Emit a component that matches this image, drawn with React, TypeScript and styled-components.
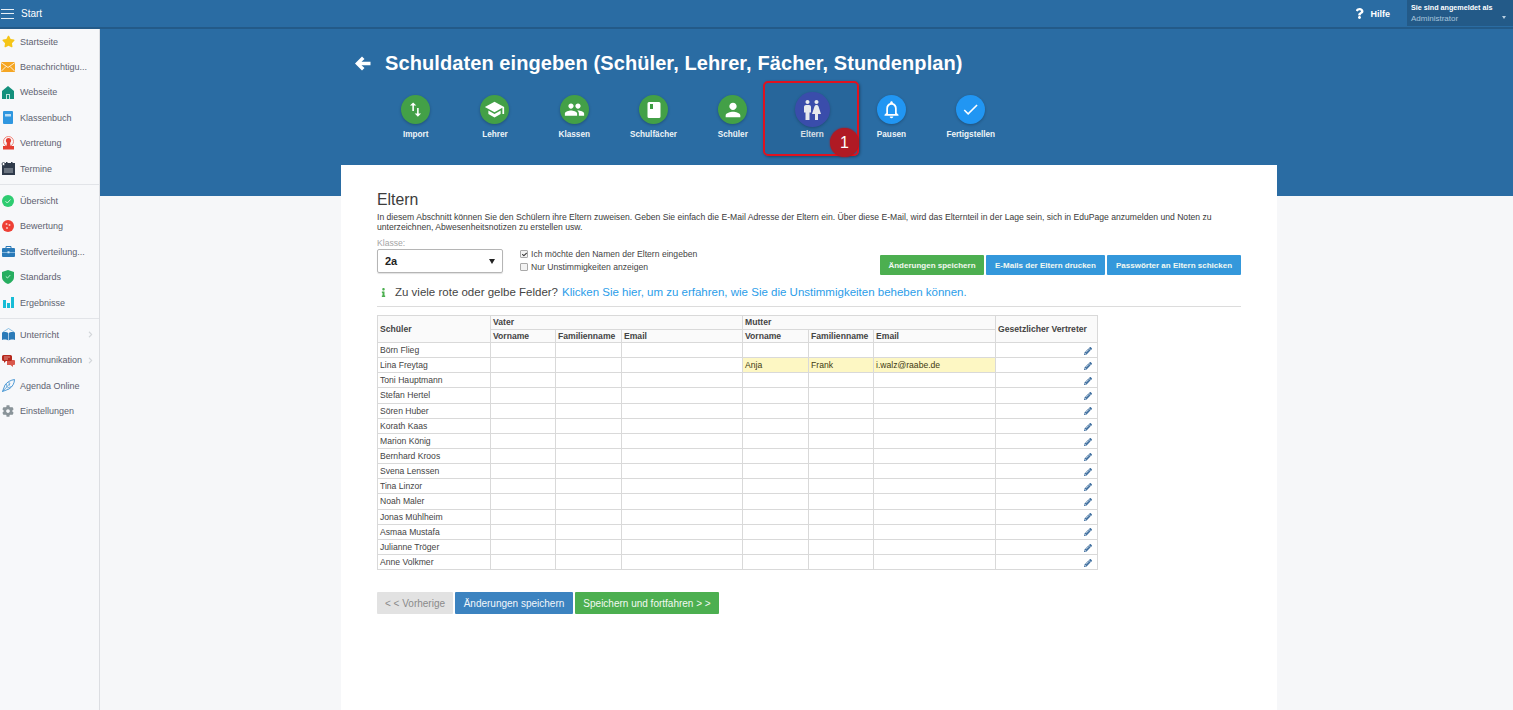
import styled, { createGlobalStyle } from "styled-components";
import {
  MdSwapVert,
  MdSchool,
  MdPeople,
  MdPerson,
  MdWc,
  MdNotificationsNone,
  MdCheck,
} from "react-icons/md";
import {
  FaQuestion,
  FaPencilAlt,
  FaInfo,
  FaStar,
  FaCog,
  FaChevronRight,
  FaCheck,
} from "react-icons/fa";

const GlobalStyle = createGlobalStyle`
  html, body {
    margin: 0;
    padding: 0;
    height: 710px;
    overflow: hidden;
    background: #f6f7f9;
    font-family: "Liberation Sans", Arial, sans-serif;
  }
  * { box-sizing: border-box; }
`;

const Page = styled.div`
  width: 1513px;
  height: 710px;
  display: flex;
  flex-direction: column;
  overflow: hidden;
`;

const TopBar = styled.header`
  flex: none;
  height: 29px;
  background: #2a6ca3;
  border-bottom: 2px solid #235a88;
  display: flex;
  align-items: center;
  color: #fff;
`;

const Burger = styled.div`
  width: 13px;
  height: 10px;
  margin: 0 8px 0 1px;
  border-top: 1px solid #e8f0f6;
  border-bottom: 1px solid #e8f0f6;
  position: relative;
  &::after {
    content: "";
    position: absolute;
    left: 0;
    right: 0;
    top: 3px;
    height: 1px;
    background: #e8f0f6;
  }
`;

const StartLabel = styled.span`
  font-size: 10px;
  margin-left: -1px;
`;

const HelpLink = styled.div`
  margin-left: auto;
  display: flex;
  align-items: center;
  gap: 5px;
  font-size: 9px;
  font-weight: 700;
  margin-right: 17px;
`;

const UserBox = styled.div`
  width: 106px;
  height: 26px;
  margin: 0 0 1px;
  padding: 2px 4px;
  background: #235a88;
  position: relative;
  font-size: 8px;
  line-height: 11px;
  &::after {
    content: "";
    position: absolute;
    right: 7px;
    top: 16px;
    border: 2.5px solid transparent;
    border-top: 3px solid #b9cfe0;
  }
`;

const UserTitle = styled.div`
  font-weight: 700;
  font-size: 7.2px;
  white-space: nowrap;
`;

const UserName = styled.div`
  color: #a9c6dd;
`;

const Body = styled.div`
  flex: 1;
  display: flex;
  min-height: 0;
`;

const Sidebar = styled.nav`
  flex: none;
  width: 100px;
  background: #f7f8fa;
  border-right: 1px solid #dcdee2;
`;

const SideGroup = styled.div<{ $last?: boolean }>`
  padding: 0 0 3px;
  border-bottom: ${(p) => (p.$last ? "none" : "1px solid #e2e4e8")};
  margin-bottom: 3px;
`;

const SideItem = styled.div`
  height: 25.4px;
  display: flex;
  align-items: center;
  position: relative;
  font-size: 9px;
  color: #5e6270;
  white-space: nowrap;
`;

const SideIcon = styled.span`
  width: 20px;
  flex: none;
  display: flex;
  justify-content: center;
  padding-right: 4px;
  svg { display: block; }
`;

const Caret = styled.span`
  position: absolute;
  right: 5px;
  top: 9px;
  color: #d3d6da;
  display: flex;
`;

const Main = styled.main`
  flex: 1;
  min-width: 0;
`;

const Banner = styled.div`
  height: 167px;
  background: #2a6ca3;
  padding: 1px 0 0 241px;
  position: relative;
`;

const HeadColumn = styled.div`
  width: 936px;
  color: #fff;
`;

const TitleRow = styled.div`
  display: flex;
  align-items: center;
  gap: 14px;
  padding: 16px 0 0 14px;
  height: 50px;
`;

const Title = styled.h1`
  margin: 0;
  font-size: 20px;
  font-weight: 700;
  letter-spacing: 0.09px;
  white-space: nowrap;
`;

const Steps = styled.div`
  display: flex;
  padding: 12px 0 0 35px;
`;

const Step = styled.div`
  width: 79.3px;
  height: 50px;
  display: flex;
  flex-direction: column;
  align-items: center;
  font-size: 8.2px;
  font-weight: 700;
  color: #eef4f8;
  white-space: nowrap;
`;

const StepIconSlot = styled.div`
  height: 35px;
  display: flex;
  align-items: center;
  justify-content: center;
  margin-bottom: 3px;
`;

const StepCircle = styled.div<{ $color: string; $big?: boolean }>`
  width: ${(p) => (p.$big ? 35 : 29)}px;
  height: ${(p) => (p.$big ? 35 : 29)}px;
  border-radius: 50%;
  background: ${(p) => p.$color};
  display: flex;
  align-items: center;
  justify-content: center;
  color: #fff;
  box-shadow: 0 1px 3px rgba(0, 0, 0, 0.25);
`;

const Highlight = styled.div`
  position: absolute;
  left: 663px;
  top: 52px;
  width: 96px;
  height: 75px;
  border: 2px solid #e0121f;
  border-radius: 5px;
  background: rgba(20, 50, 90, 0.1);
  box-shadow: 1px 1px 3px rgba(0, 0, 0, 0.35);
`;

const Badge = styled.div`
  position: absolute;
  left: 730px;
  top: 99px;
  width: 29px;
  height: 29px;
  border-radius: 50%;
  background: #b01a24;
  color: #fff;
  font-size: 16px;
  display: flex;
  align-items: center;
  justify-content: center;
  box-shadow: 0 0 2px rgba(200, 0, 0, 0.8);
`;

const Card = styled.section`
  position: relative;
  width: 936px;
  height: 600px;
  margin: -31px 0 0 241px;
  padding: 25px 36px 0;
  background: #fff;
  color: #333;
`;

const SectionTitle = styled.h2`
  margin: 0;
  font-size: 15.8px;
  font-weight: 400;
  line-height: 19px;
  color: #3c3c3c;
`;

const Intro = styled.p`
  margin: 3px 0 0;
  width: 864px;
  font-size: 8.6px;
  line-height: 10px;
  color: #3a3a3a;
`;

const FormRow = styled.div`
  display: flex;
  align-items: flex-start;
  margin-top: 6px;
`;

const FieldLabel = styled.div`
  font-size: 8.6px;
  line-height: 11px;
  color: #a5a5a5;
`;

const SelectBox = styled.div`
  width: 126px;
  height: 24px;
  border: 1px solid #b5b5b5;
  border-radius: 2px;
  box-shadow: 0 1px 1px rgba(0, 0, 0, 0.12);
  padding: 0 7px;
  display: flex;
  align-items: center;
  justify-content: space-between;
  font-size: 11px;
  font-weight: 700;
  color: #222;
`;

const Arrow = styled.span`
  width: 0;
  height: 0;
  border: 3px solid transparent;
  border-top: 5px solid #222;
  margin: 4px 0 0;
`;

const Checks = styled.div`
  margin: 11px 0 0 17px;
  display: flex;
  flex-direction: column;
  gap: 3px;
`;

const CheckLine = styled.label`
  display: flex;
  align-items: center;
  gap: 3px;
  font-size: 8.6px;
  line-height: 10px;
  color: #444;
`;

const CheckSquare = styled.span`
  width: 8px;
  height: 8px;
  border: 1px solid #a9a9a9;
  border-radius: 1px;
  background: #f3f3f3;
  display: flex;
  align-items: center;
  justify-content: center;
  color: #333;
`;

const ActionGroup = styled.div`
  margin: 17px 0 0 auto;
  display: flex;
  gap: 2px;
`;

const SmallButton = styled.div<{ $color: string; $width: number }>`
  width: ${(p) => p.$width}px;
  height: 20px;
  background: ${(p) => p.$color};
  color: #f2f8f2;
  border-radius: 1px;
  font-size: 8px;
  font-weight: 700;
  display: flex;
  align-items: center;
  justify-content: center;
  white-space: nowrap;
`;

const Hint = styled.div`
  display: flex;
  align-items: center;
  margin-top: 10px;
  padding: 0 0 7px 2px;
  border-bottom: 1px solid #dcdcdc;
  font-size: 11.5px;
  line-height: 14px;
  color: #444;
  white-space: nowrap;
`;

const HintIcon = styled.span`
  color: #4caf50;
  width: 16px;
  display: flex;
`;

const HintLink = styled.span`
  color: #2b9de9;
  margin-left: 4px;
`;

const Grid = styled.table`
  margin-top: 8px;
  width: 720px;
  table-layout: fixed;
  border-collapse: collapse;
  font-size: 8.6px;
  color: #444;
`;

const HeadCell = styled.th`
  border: 1px solid #d9d9d9;
  background: #fafafa;
  text-align: left;
  font-weight: 700;
  padding: 0 2px;
  height: 13.5px;
  line-height: 10px;
  white-space: nowrap;
`;

const Cell = styled.td<{ $warn?: boolean }>`
  border: 1px solid #d9d9d9;
  background: ${(p) => (p.$warn ? "#fdf7c3" : "#fff")};
  height: 15.15px;
  padding: 0 2px;
  line-height: 10px;
  white-space: nowrap;
  color: ${(p) => (p.$warn ? "#3d3a12" : "#444")};
`;

const EditCell = styled(Cell)`
  text-align: right;
  padding: 0 5px 0 0;
  color: #3f6f9f;
  svg { display: inline-block; vertical-align: middle; }
`;

const BottomButtons = styled.div`
  display: flex;
  gap: 2px;
  margin-top: 22px;
`;

const BigButton = styled.div<{ $bg: string; $fg: string; $width: number }>`
  width: ${(p) => p.$width}px;
  height: 22px;
  background: ${(p) => p.$bg};
  color: ${(p) => p.$fg};
  border-radius: 1px;
  font-size: 10px;
  display: flex;
  align-items: center;
  justify-content: center;
  white-space: nowrap;
`;

const BackArrow = () => (
  <svg width="16" height="15" viewBox="0 0 16 15" fill="#fff">
    <path d="M0 7.500 7 .5 9.500 3 6.500 5.800H15.500V9.200H6.500L9.500 12 7 14.500Z" />
  </svg>
);

const EnvelopeIcon = () => (
  <svg width="14" height="10" viewBox="0 0 14 10">
    <rect width="14" height="10" fill="#f5a623" />
    <path d="M0 0.5 7 5.5 14 0.5M0 9.5 5 4.5M14 9.5 9 4.5" fill="none" stroke="#fff" strokeWidth="0.8" />
  </svg>
);

const HomeIcon = () => (
  <svg width="12" height="13" viewBox="0 0 12 13">
    <path d="M6 0 12 5V13H0V5Z" fill="#13907c" />
    <rect x="4" y="8" width="4" height="5" fill="#bfe3dc" />
    <rect x="5" y="9" width="2" height="4" fill="#13907c" />
  </svg>
);

const BookIcon = () => (
  <svg width="10" height="13" viewBox="0 0 10 13">
    <rect width="10" height="13" rx="1" fill="#2f97e0" />
    <rect x="2" y="3" width="6" height="2.5" fill="#bcdff6" />
  </svg>
);

const StampIcon = () => (
  <svg width="13" height="14" viewBox="0 0 13 14">
    <circle cx="6.5" cy="5.5" r="5" fill="none" stroke="#ef6a5c" strokeWidth="0.8" />
    <circle cx="6.5" cy="4.5" r="2.6" fill="#e53d30" />
    <path d="M5 6h3l.5 4H12v3.5H1V10h3.500Z" fill="#e53d30" />
  </svg>
);

const CalendarIcon = () => (
  <svg width="14" height="13" viewBox="0 0 14 13">
    <rect x="1" y="1" width="13" height="12" fill="#2f3a4a" />
    <rect x="3" y="6" width="9" height="5" fill="#6b7480" />
    <circle cx="2.500" cy="2" r="1.500" fill="#fff" stroke="#2f3a4a" strokeWidth="0.8" />
    <rect x="5" y="0" width="1.500" height="3" fill="#2f3a4a" />
    <rect x="10" y="0" width="1.500" height="3" fill="#2f3a4a" />
  </svg>
);

const GreenCheckIcon = () => (
  <svg width="12" height="12" viewBox="0 0 12 12">
    <circle cx="6" cy="6" r="6" fill="#2ecc71" />
    <path d="M3.500 6.200 5.300 8 8.500 4.500" fill="none" stroke="#c9f5da" strokeWidth="1" />
  </svg>
);

const GradeIcon = () => (
  <svg width="12" height="12" viewBox="0 0 12 12">
    <circle cx="6" cy="6" r="6" fill="#ee4035" />
    <circle cx="4.500" cy="4" r="1" fill="#fbc4bf" />
    <circle cx="7.500" cy="5" r="1" fill="#fbc4bf" />
    <circle cx="5" cy="8" r="1" fill="#fbc4bf" />
  </svg>
);

const CaseIcon = () => (
  <svg width="13" height="11" viewBox="0 0 13 11">
    <path d="M4 2V.5h5V2" fill="none" stroke="#2a7ab8" />
    <rect y="2" width="13" height="9" rx="1" fill="#2a7ab8" />
    <rect y="6" width="13" height="0.7" fill="#a8d0ec" />
    <rect x="5.500" y="5.300" width="2" height="2" fill="#d7ebf8" />
  </svg>
);

const ShieldIcon = () => (
  <svg width="12" height="14" viewBox="0 0 12 14">
    <path d="M6 0 12 2V7C12 10.500 9 12.800 6 14 3 12.800 0 10.500 0 7V2Z" fill="#27ae60" />
    <path d="M3.800 6.500 5.500 8 8.300 5" fill="none" stroke="#c9f5da" strokeWidth="0.9" />
  </svg>
);

const BarsIcon = () => (
  <svg width="11" height="11" viewBox="0 0 11 11">
    <rect y="3" width="3" height="8" fill="#17bcd6" />
    <rect x="4" y="6" width="3" height="5" fill="#17bcd6" />
    <rect x="8" y="0" width="3" height="11" fill="#17bcd6" />
  </svg>
);

const OpenBookIcon = () => (
  <svg width="13" height="13" viewBox="0 0 13 13">
    <path d="M1 4 6.500.5 12 4" fill="none" stroke="#6fb1de" strokeWidth="0.8" />
    <path d="M0 4.500C2.500 3.800 5 4 6.200 5.200V12.500C5 11.500 2.500 11.200 0 12Z" fill="#2a7ab8" />
    <path d="M13 4.500C10.500 3.800 8 4 6.800 5.200V12.500C8 11.500 10.500 11.200 13 12Z" fill="#2a7ab8" />
  </svg>
);

const BubblesIcon = () => (
  <svg width="13" height="13" viewBox="0 0 13 13">
    <path d="M5 6h7a1 1 0 0 1 1 1v3a1 1 0 0 1-1 1h-1v2l-2.500-2H5Z" fill="#d9584c" />
    <path d="M1.500 1h7A1.500 1.500 0 0 1 10 2.500v3A1.500 1.500 0 0 1 8.500 7H4L2 9V7h-.5A1.500 1.500 0 0 1 0 5.500v-3A1.500 1.500 0 0 1 1.500 1Z" fill="#b5281c" />
    <path d="M2 3h6M2 5h4" stroke="#f3c2bd" strokeWidth="0.7" />
  </svg>
);

const FeatherIcon = () => (
  <svg width="13" height="13" viewBox="0 0 13 13">
    <path d="M.5 12.500 3 6C5 3 9 1 12.500.5 12.500 4 10.500 8 7 10Z" fill="none" stroke="#3b8fd0" strokeWidth="0.9" />
    <path d="M.5 12.500 8 4.500M4.500 5 5 8.500M7 3 7.500 6.500M5.500 9 9.500 7.500" fill="none" stroke="#3b8fd0" strokeWidth="0.7" />
  </svg>
);

type MenuEntry = { label: string; icon: React.ReactNode; more?: boolean };

const menuGroups: MenuEntry[][] = [
  [
    { label: "Startseite", icon: <FaStar size={13} color="#f5c518" /> },
    { label: "Benachrichtigu...", icon: <EnvelopeIcon /> },
    { label: "Webseite", icon: <HomeIcon /> },
    { label: "Klassenbuch", icon: <BookIcon /> },
    { label: "Vertretung", icon: <StampIcon /> },
    { label: "Termine", icon: <CalendarIcon /> },
  ],
  [
    { label: "Übersicht", icon: <GreenCheckIcon /> },
    { label: "Bewertung", icon: <GradeIcon /> },
    { label: "Stoffverteilung...", icon: <CaseIcon /> },
    { label: "Standards", icon: <ShieldIcon /> },
    { label: "Ergebnisse", icon: <BarsIcon /> },
  ],
  [
    { label: "Unterricht", icon: <OpenBookIcon />, more: true },
    { label: "Kommunikation", icon: <BubblesIcon />, more: true },
    { label: "Agenda Online", icon: <FeatherIcon /> },
    { label: "Einstellungen", icon: <FaCog size={12} color="#8a9499" /> },
  ],
];

const NotebookIcon = () => (
  <svg width="14" height="16" viewBox="0 0 14 16">
    <path d="M2 0h10a1.500 1.500 0 0 1 1.500 1.500v13A1.500 1.500 0 0 1 12 16H2a1.500 1.500 0 0 1-1.500-1.500v-13A1.500 1.500 0 0 1 2 0Z" fill="#fff" />
    <rect x="3" y="2" width="3" height="5" fill="#3d9c42" />
  </svg>
);

const green = "#43a047";
const blue = "#2196f3";

const steps = [
  { label: "Import", color: green, icon: <MdSwapVert size={19} /> },
  { label: "Lehrer", color: green, icon: <MdSchool size={21} /> },
  { label: "Klassen", color: green, icon: <MdPeople size={21} /> },
  { label: "Schulfächer", color: green, icon: <NotebookIcon /> },
  { label: "Schüler", color: green, icon: <MdPerson size={22} /> },
  { label: "Eltern", color: "#3f51b5", icon: <MdWc size={24} />, big: true },
  { label: "Pausen", color: blue, icon: <MdNotificationsNone size={21} /> },
  { label: "Fertigstellen", color: blue, icon: <MdCheck size={19} /> },
];

const students = [
  "Börn Flieg",
  "Lina Freytag",
  "Toni Hauptmann",
  "Stefan Hertel",
  "Sören Huber",
  "Korath Kaas",
  "Marion König",
  "Bernhard Kroos",
  "Svena Lenssen",
  "Tina Linzor",
  "Noah Maler",
  "Jonas Mühlheim",
  "Asmaa Mustafa",
  "Julianne Tröger",
  "Anne Volkmer",
];

const columnWidths = [113, 65, 66, 121, 66, 65, 122, 102];

export default function App() {
  return (
    <Page>
      <GlobalStyle />
      <TopBar>
        <Burger />
        <StartLabel>Start</StartLabel>
        <HelpLink>
          <FaQuestion size={11} />
          Hilfe
        </HelpLink>
        <UserBox>
          <UserTitle>Sie sind angemeldet als</UserTitle>
          <UserName>Administrator</UserName>
        </UserBox>
      </TopBar>
      <Body>
        <Sidebar>
          {menuGroups.map((group, i) => (
            <SideGroup key={i} $last={i === menuGroups.length - 1}>
              {group.map((item) => (
                <SideItem key={item.label}>
                  <SideIcon>{item.icon}</SideIcon>
                  {item.label}
                  {item.more && (
                    <Caret>
                      <FaChevronRight size={7} />
                    </Caret>
                  )}
                </SideItem>
              ))}
            </SideGroup>
          ))}
        </Sidebar>
        <Main>
          <Banner>
            <HeadColumn>
              <TitleRow>
                <BackArrow />
                <Title>Schuldaten eingeben (Schüler, Lehrer, Fächer, Stundenplan)</Title>
              </TitleRow>
              <Steps>
                {steps.map((s) => (
                  <Step key={s.label}>
                    <StepIconSlot>
                      <StepCircle $color={s.color} $big={s.big}>
                        {s.icon}
                      </StepCircle>
                    </StepIconSlot>
                    {s.label}
                  </Step>
                ))}
              </Steps>
            </HeadColumn>
            <Highlight />
            <Badge>1</Badge>
          </Banner>
          <Card>
            <SectionTitle>Eltern</SectionTitle>
            <Intro>
              In diesem Abschnitt können Sie den Schülern ihre Eltern zuweisen. Geben Sie einfach die E-Mail Adresse der
              Eltern ein. Über diese E-Mail, wird das Elternteil in der Lage sein, sich in EduPage anzumelden und Noten zu
              unterzeichnen, Abwesenheitsnotizen zu erstellen usw.
            </Intro>
            <FormRow>
              <div>
                <FieldLabel>Klasse:</FieldLabel>
                <SelectBox>
                  2a
                  <Arrow />
                </SelectBox>
              </div>
              <Checks>
                <CheckLine>
                  <CheckSquare>
                    <FaCheck size={5} />
                  </CheckSquare>
                  Ich möchte den Namen der Eltern eingeben
                </CheckLine>
                <CheckLine>
                  <CheckSquare />
                  Nur Unstimmigkeiten anzeigen
                </CheckLine>
              </Checks>
              <ActionGroup>
                <SmallButton $color="#4caf50" $width={104}>
                  Änderungen speichern
                </SmallButton>
                <SmallButton $color="#3498db" $width={119}>
                  E-Mails der Eltern drucken
                </SmallButton>
                <SmallButton $color="#3498db" $width={134}>
                  Passwörter an Eltern schicken
                </SmallButton>
              </ActionGroup>
            </FormRow>
            <Hint>
              <HintIcon>
                <FaInfo size={9} />
              </HintIcon>
              Zu viele rote oder gelbe Felder?
              <HintLink>Klicken Sie hier, um zu erfahren, wie Sie die Unstimmigkeiten beheben können.</HintLink>
            </Hint>
            <Grid>
              <colgroup>
                {columnWidths.map((w, i) => (
                  <col key={i} width={w} />
                ))}
              </colgroup>
              <thead>
                <tr>
                  <HeadCell rowSpan={2}>Schüler</HeadCell>
                  <HeadCell colSpan={3}>Vater</HeadCell>
                  <HeadCell colSpan={3}>Mutter</HeadCell>
                  <HeadCell rowSpan={2}>Gesetzlicher Vertreter</HeadCell>
                </tr>
                <tr>
                  <HeadCell>Vorname</HeadCell>
                  <HeadCell>Familienname</HeadCell>
                  <HeadCell>Email</HeadCell>
                  <HeadCell>Vorname</HeadCell>
                  <HeadCell>Familienname</HeadCell>
                  <HeadCell>Email</HeadCell>
                </tr>
              </thead>
              <tbody>
                {students.map((name) => {
                  const warn = name === "Lina Freytag";
                  return (
                    <tr key={name}>
                      <Cell>{name}</Cell>
                      <Cell />
                      <Cell />
                      <Cell />
                      <Cell $warn={warn}>{warn && "Anja"}</Cell>
                      <Cell $warn={warn}>{warn && "Frank"}</Cell>
                      <Cell $warn={warn}>{warn && "i.walz@raabe.de"}</Cell>
                      <EditCell>
                        <FaPencilAlt size={8} />
                      </EditCell>
                    </tr>
                  );
                })}
              </tbody>
            </Grid>
            <BottomButtons>
              <BigButton $bg="#e2e2e2" $fg="#8a8a8a" $width={76}>
                &lt; &lt; Vorherige
              </BigButton>
              <BigButton $bg="#3c83c0" $fg="#f2f7fb" $width={118}>
                Änderungen speichern
              </BigButton>
              <BigButton $bg="#4caf50" $fg="#f2f9f2" $width={144}>
                Speichern und fortfahren &gt; &gt;
              </BigButton>
            </BottomButtons>
          </Card>
        </Main>
      </Body>
    </Page>
  );
}
